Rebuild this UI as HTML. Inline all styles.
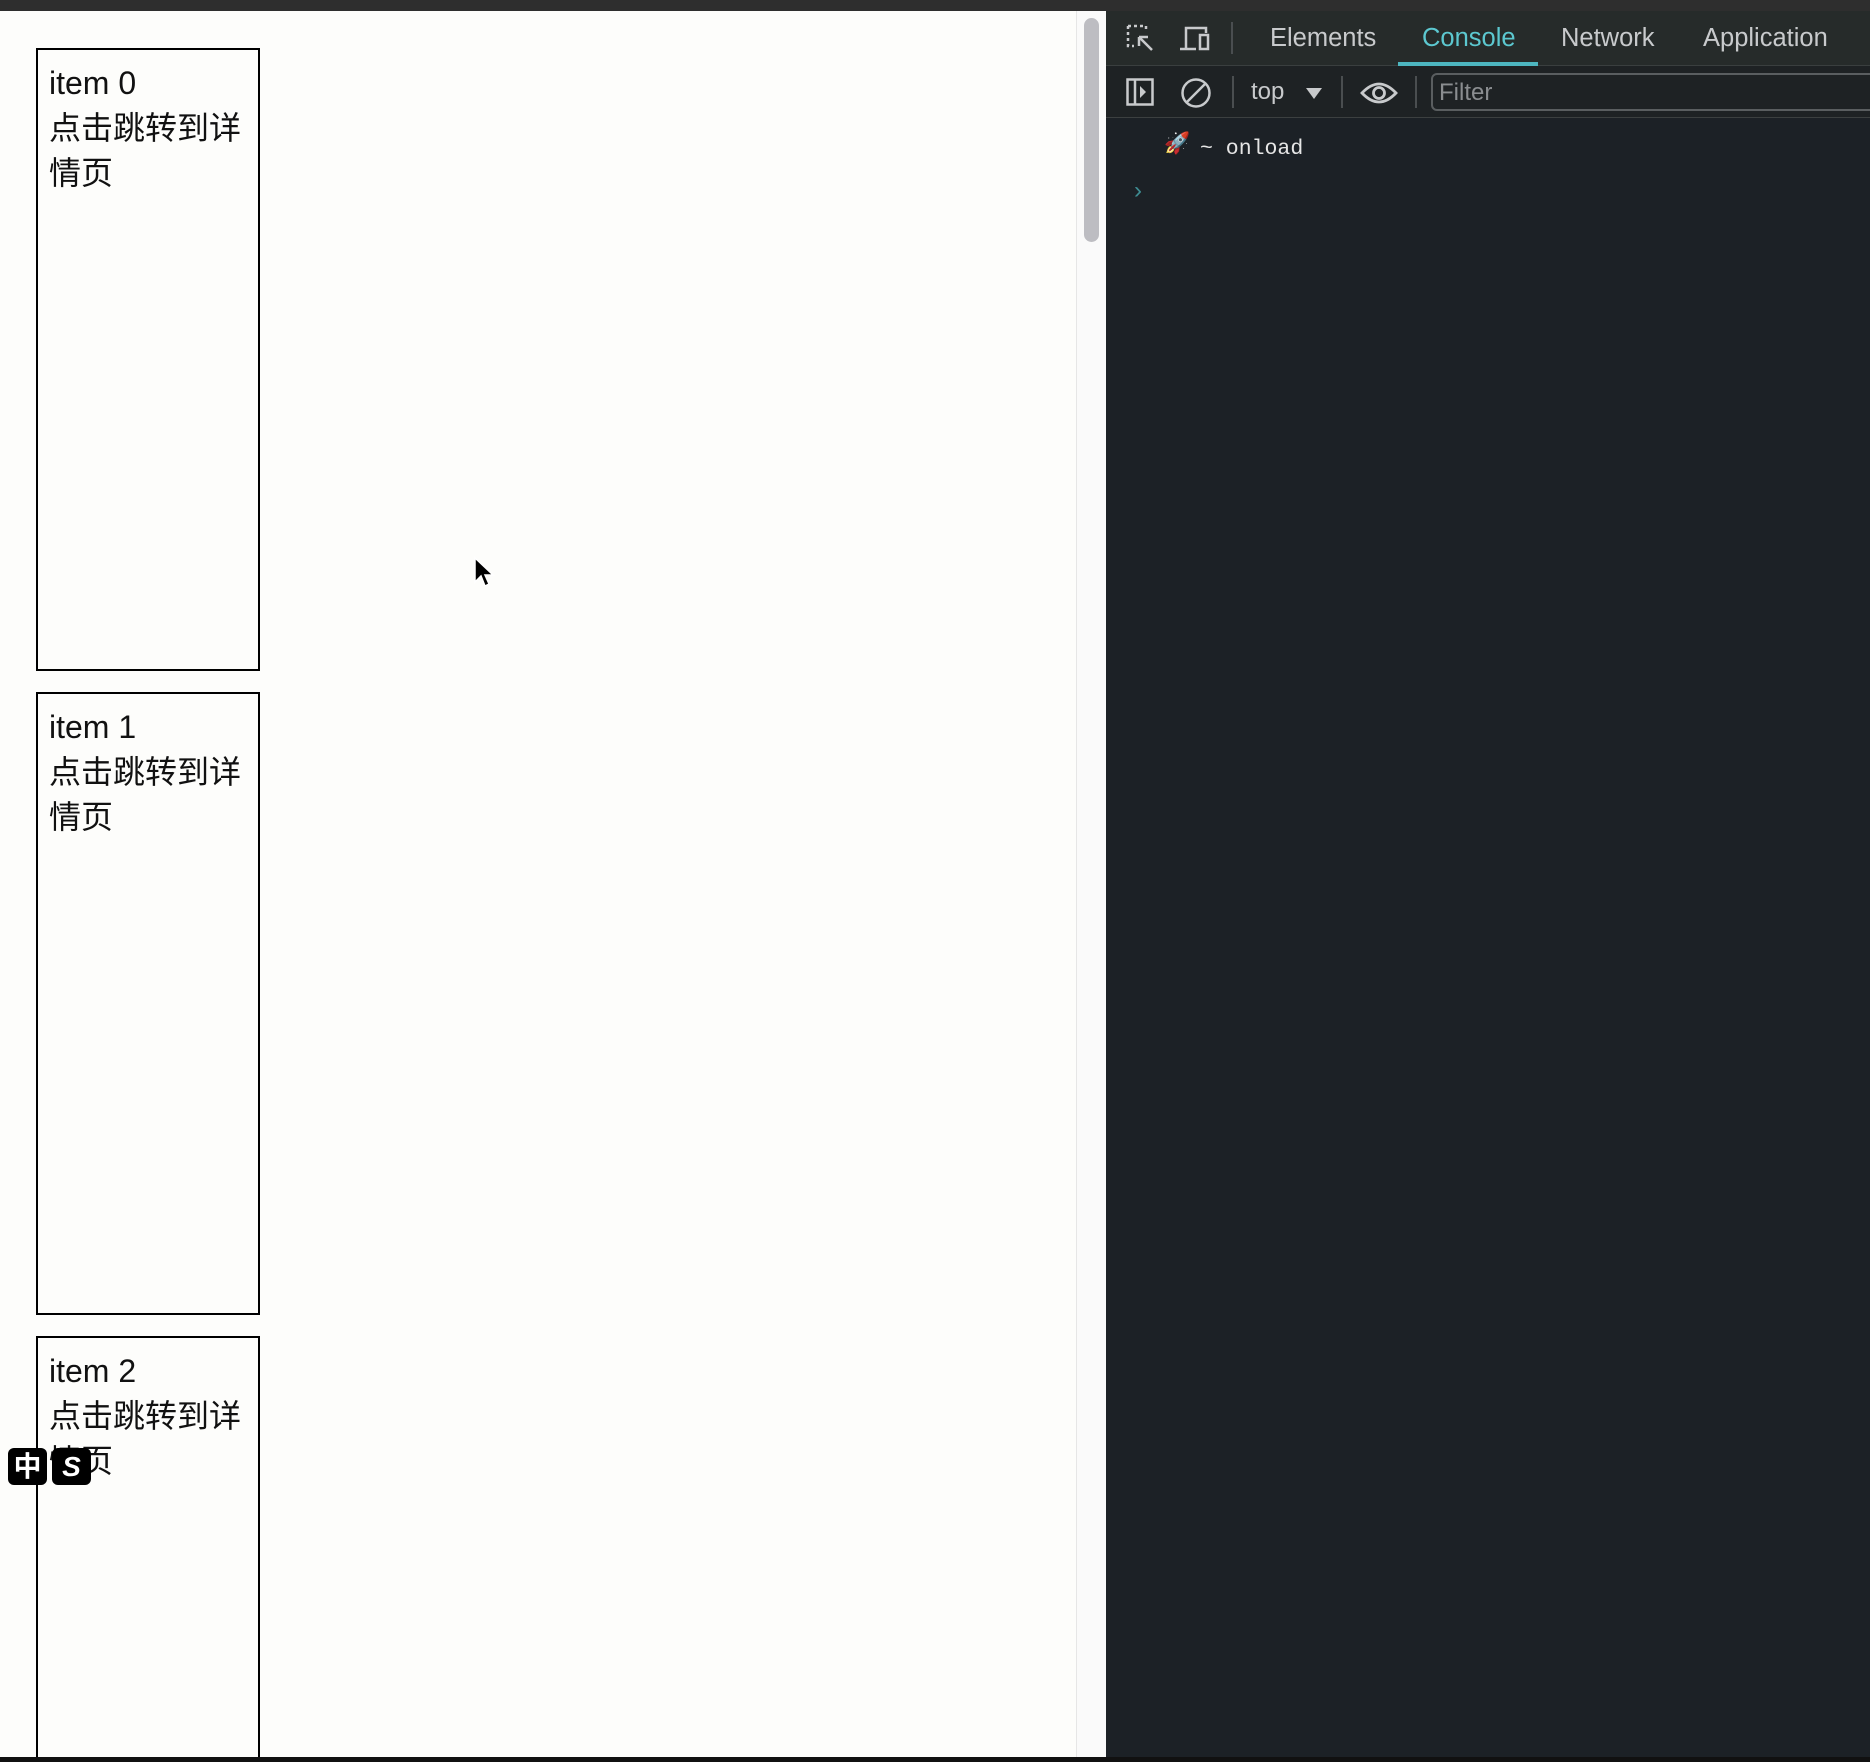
<!DOCTYPE html>
<html><head><meta charset="utf-8"><style>
*{margin:0;padding:0;box-sizing:border-box}
html,body{width:1870px;height:1762px;overflow:hidden}
body{background:#fdfdfb;position:relative;font-family:"Liberation Sans","Noto Sans CJK SC",sans-serif}
.top{position:absolute;left:0;top:0;width:1870px;height:11px;background:#2e2e2e}
.bot{position:absolute;left:0;top:1757px;width:1870px;height:5px;background:#111}
.box{position:absolute;left:36px;width:224px;border:2px solid #000;padding:11px 0 0 11px;font-size:32px;line-height:45px;color:#111;overflow:hidden}
.track{position:absolute;left:1076px;top:11px;width:30px;height:1746px;background:#fafafa;border-left:1px solid #e6e6e6}
.thumb{position:absolute;left:1084px;top:18px;width:15px;height:224px;border-radius:8px;background:#bdbdc2}
.dev{position:absolute;left:1106px;top:11px;width:764px;height:1746px;background:#1c2126;overflow:hidden}
.tabs{position:absolute;left:0;top:0;width:764px;height:55px;background:#262b2a;border-bottom:1px solid #3a3f3f}
.tab{position:absolute;top:13px;font-size:25.5px;color:#c8cacc}
.tool{position:absolute;left:0;top:55px;width:764px;height:52px;background:#1e2224;border-bottom:1px solid #3c4040}
.sep{position:absolute;top:10px;width:2px;height:32px;background:#4a4e50}
.ime{position:absolute;top:1448px;width:39px;height:37px;background:#000;border-radius:6px;color:#fff;font-weight:bold;font-size:28px;text-align:center;line-height:37px}
</style></head><body>
<div class="top"></div>
<div class="box" style="top:48px;height:623px">item 0<br>点击跳转到详<br>情页</div>
<div class="box" style="top:692px;height:623px">item 1<br>点击跳转到详<br>情页</div>
<div class="box" style="top:1336px;height:426px">item 2<br>点击跳转到详<br>情页</div>
<div class="ime" style="left:8px">中</div>
<div class="ime" style="left:52px;font-style:italic">S</div>
<svg style="position:absolute;left:473px;top:556px" width="24" height="36" viewBox="0 0 24 36"><path d="M2 2 L2 26 L8 20 L12 30 L16 28 L12 19 L20 19 Z" fill="#000" stroke="#fff" stroke-width="1.5"/></svg>
<div class="track"></div><div class="thumb"></div>
<div class="dev">
 <div class="tabs">
  <svg style="position:absolute;left:20px;top:13px" width="28" height="28" viewBox="0 0 28 28" fill="none" stroke="#c8cacc" stroke-width="2.5"><path d="M2 2h18v6M2 2v20h6" stroke-dasharray="3 3"/><path d="M13 13l13 13M13 13v9M13 13h9"/></svg>
  <svg style="position:absolute;left:74px;top:14px" width="32" height="26" viewBox="0 0 32 26" fill="none" stroke="#c8cacc" stroke-width="2.5"><path d="M6 24V3h20v5M0 24h16"/><rect x="20" y="10" width="8" height="14"/></svg>
  <div class="sep" style="left:125px;top:11px"></div>
  <div class="tab" style="left:164px">Elements</div>
  <div class="tab" style="left:316px;color:#5cc8d0">Console</div>
  <div style="position:absolute;left:292px;top:51px;width:140px;height:4px;background:#4db6c0"></div>
  <div class="tab" style="left:455px">Network</div>
  <div class="tab" style="left:597px">Application</div>
 </div>
 <div class="tool">
  <svg style="position:absolute;left:20px;top:12px" width="28" height="28" viewBox="0 0 28 28" fill="none" stroke="#c8cacc" stroke-width="2.5"><rect x="1.5" y="1.5" width="25" height="25"/><path d="M9 1.5v25"/><path d="M14 8l6 6-6 6z" fill="#c8cacc" stroke="none"/></svg>
  <svg style="position:absolute;left:74px;top:11px" width="32" height="32" viewBox="0 0 32 32" fill="none" stroke="#c8cacc" stroke-width="2.5"><circle cx="16" cy="16" r="13.5"/><path d="M7 25L25 7"/></svg>
  <div class="sep" style="left:126px"></div>
  <div style="position:absolute;left:145px;top:12px;font-size:24px;color:#c8cacc">top</div>
  <svg style="position:absolute;left:199px;top:21px" width="18" height="13"><path d="M1 1h16L9 12z" fill="#c8cacc"/></svg>
  <div class="sep" style="left:235px"></div>
  <svg style="position:absolute;left:254px;top:15px" width="38" height="24" viewBox="0 0 38 24" fill="none" stroke="#c8cacc" stroke-width="2.8"><path d="M2 12Q19-6 36 12Q19 30 2 12z"/><circle cx="19" cy="12" r="5.5"/></svg>
  <div class="sep" style="left:309px"></div>
  <div style="position:absolute;left:325px;top:7px;width:460px;height:38px;border:2px solid #5a5e60;border-radius:6px;font-size:24px;color:#8a8d90;padding:4px 6px">Filter</div>
 </div>
 <div style="position:absolute;left:58px;top:121px;font-size:21px">🚀</div>
 <div style="position:absolute;left:94px;top:126px;font-family:'Liberation Mono',monospace;font-size:21.5px;color:#e6e6e6">~ onload</div>
 <div style="position:absolute;left:28px;top:166px;font-size:24px;color:#3e8d93">›</div>
</div>
<div class="bot"></div>
</body></html>
